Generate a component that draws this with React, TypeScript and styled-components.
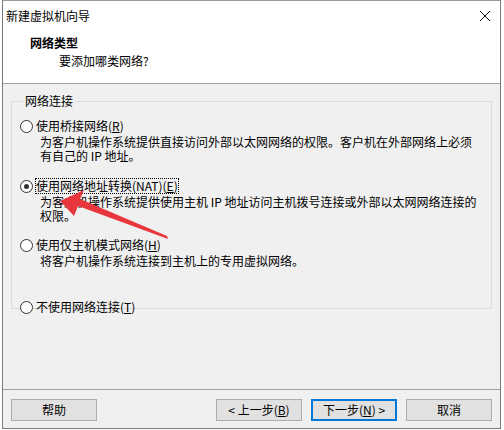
import * as React from "react";
import styled, { createGlobalStyle } from "styled-components";

const GlobalStyle = createGlobalStyle`
  html, body {
    margin: 0;
    padding: 0;
    background: #ffffff;
  }
  body {
    font-family: "Noto Sans CJK SC", "Microsoft YaHei", sans-serif;
    font-size: 12px;
    color: #000;
  }
`;

const Screen = styled.div`
  position: relative;
  width: 504px;
  height: 430px;
  overflow: hidden;
`;

const Window = styled.div`
  margin-left: 2px;
  width: 497px;
  height: 427px;
  border: 1px solid #7a7a7a;
  border-top-color: #9a9a9a;
  display: flex;
  flex-direction: column;
  background: #f0f0f0;
`;

const TitleBar = styled.div`
  height: 30px;
  background: #fff;
  display: flex;
  align-items: center;
  justify-content: space-between;
  padding: 0 9px 0 3px;
  line-height: 14px;
`;

const Header = styled.div`
  background: #fff;
  border-bottom: 1px solid #a0a0a0;
  padding: 4px 0 0 27px;
  box-sizing: border-box;
  height: 53px;
`;

const HeaderTitle = styled.div`
  font-weight: bold;
  line-height: 16px;
`;

const HeaderSub = styled.div`
  padding-left: 29px;
  margin-top: 3px;
  line-height: 14px;
`;

const Body = styled.div`
  flex: 1;
  padding: 10px 8px 0 8px;
  border-bottom: 1px solid #a0a0a0;
`;

const Group = styled.fieldset`
  margin: 0;
  padding: 5px 0 0 8px;
  border: 1px solid #dcdcdc;
  height: 215px;
  box-sizing: border-box;
`;

const Legend = styled.legend`
  padding: 0 2px;
  margin-left: 3px;
  line-height: 14px;
`;

const Option = styled.div<{ $gap: number }>`
  margin-top: ${(p) => p.$gap}px;
`;

const RadioRow = styled.label`
  display: flex;
  align-items: center;
  gap: 3px;
  line-height: 14px;
`;

const RadioCircle = styled.span<{ $checked?: boolean }>`
  width: 11px;
  height: 11px;
  border: 1px solid #333;
  border-radius: 50%;
  background: #fff;
  display: flex;
  align-items: center;
  justify-content: center;
  &::after {
    content: "";
    width: 5px;
    height: 5px;
    border-radius: 50%;
    background: ${(p) => (p.$checked ? "#333" : "transparent")};
  }
`;

const LabelText = styled.span<{ $focus?: boolean }>`
  outline: ${(p) => (p.$focus ? "1px dotted #000" : "none")};
  outline-offset: 0;
`;

const Key = styled.span`
  text-decoration: underline;
`;

const Desc = styled.div`
  padding-left: 20px;
  margin-top: 2px;
  line-height: 14px;
  white-space: nowrap;
`;

const Footer = styled.div`
  height: 38px;
  display: flex;
  padding: 9px 0 0 8px;
  box-sizing: border-box;
  gap: 9px;
`;

const Button = styled.button<{ $default?: boolean }>`
  width: 86px;
  height: 22px;
  box-sizing: border-box;
  font-family: inherit;
  font-size: 12px;
  line-height: 14px;
  padding: 0;
  background: #e1e1e1;
  color: #000;
  border: ${(p) => (p.$default ? "2px solid #0078d7" : "1px solid #adadad")};
`;

const Spacer = styled.div`
  width: 101px;
`;

const Arrow = styled.svg`
  position: absolute;
  left: 0;
  top: 0;
  pointer-events: none;
`;

const options = [
  {
    label: "使用桥接网络(",
    key: "R",
    desc: [
      "为客户机操作系统提供直接访问外部以太网网络的权限。客户机在外部网络上必须",
      "有自己的 IP 地址。",
    ],
    gap: 6,
  },
  {
    label: "使用网络地址转换(NAT)(",
    key: "E",
    desc: [
      "为客户机操作系统提供使用主机 IP 地址访问主机拨号连接或外部以太网网络连接的",
      "权限。",
    ],
    gap: 16,
    checked: true,
  },
  {
    label: "使用仅主机模式网络(",
    key: "H",
    desc: ["将客户机操作系统连接到主机上的专用虚拟网络。"],
    gap: 15,
  },
  { label: "不使用网络连接(", key: "T", desc: [], gap: 32 },
];

export default function App() {
  return (
    <Screen>
      <GlobalStyle />
      <Window>
        <TitleBar>
          <span>新建虚拟机向导</span>
          <svg width="12" height="12" viewBox="0 0 12 12">
            <path d="M1 1 L11 11 M11 1 L1 11" stroke="#111" strokeWidth="1" />
          </svg>
        </TitleBar>
        <Header>
          <HeaderTitle>网络类型</HeaderTitle>
          <HeaderSub>要添加哪类网络?</HeaderSub>
        </Header>
        <Body>
          <Group>
            <Legend>网络连接</Legend>
            {options.map((o) => (
              <Option key={o.key} $gap={o.gap}>
                <RadioRow>
                  <RadioCircle $checked={o.checked} />
                  <LabelText $focus={o.checked}>
                    {o.label}
                    <Key>{o.key}</Key>)
                  </LabelText>
                </RadioRow>
                {o.desc.length > 0 && (
                  <Desc>
                    {o.desc.map((line) => (
                      <div key={line}>{line}</div>
                    ))}
                  </Desc>
                )}
              </Option>
            ))}
          </Group>
        </Body>
        <Footer>
          <Button>帮助</Button>
          <Spacer />
          <Button>
            &lt; 上一步(<Key>B</Key>)
          </Button>
          <Button $default>
            下一步(<Key>N</Key>) &gt;
          </Button>
          <Button>取消</Button>
        </Footer>
      </Window>
      <Arrow width="504" height="430" viewBox="0 0 504 430">
        <polygon
          points="60,201 84,190 80,199 167,236 168,239 78,206 74,216"
          fill="#e8373c"
        />
      </Arrow>
    </Screen>
  );
}
